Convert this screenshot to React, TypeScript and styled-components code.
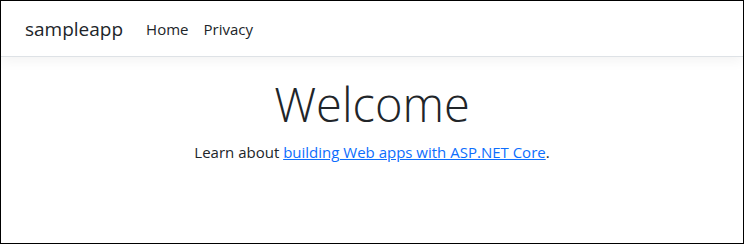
import React from "react";
import styled, { createGlobalStyle } from "styled-components";

const GlobalStyle = createGlobalStyle`
  html, body {
    margin: 0;
    padding: 0;
    background: #ffffff;
  }
  body {
    font-family: "Open Sans", "Noto Sans", sans-serif;
    color: #212529;
  }
  * {
    box-sizing: border-box;
  }
`;

const Frame = styled.div`
  width: 744px;
  height: 244px;
  border: 1px solid #000000;
  overflow: hidden;
  display: flex;
  flex-direction: column;
`;

const Navbar = styled.header`
  height: 56px;
  flex-shrink: 0;
  display: flex;
  align-items: center;
  padding: 0 24px;
  border-bottom: 1px solid #dee2e6;
  box-shadow: 0 4px 12px rgba(0, 0, 0, 0.05);
`;

const Brand = styled.a`
  font-size: 19px;
  color: #212529;
  text-decoration: none;
  margin-right: 23px;
`;

const NavList = styled.nav`
  display: flex;
  gap: 15px;
`;

const NavLink = styled.a`
  font-size: 15px;
  color: #212529;
  text-decoration: none;
`;

const Main = styled.main`
  display: flex;
  flex-direction: column;
  align-items: center;
  padding-top: 19px;
`;

const Title = styled.h1`
  margin: 0;
  font-size: 47px;
  font-weight: 300;
  line-height: 1.2;
`;

const Lead = styled.p`
  margin: 10px 0 0;
  font-size: 15px;
  a {
    color: #0d6efd;
  }
`;

const App = () => {
  return (
    <>
      <GlobalStyle />
      <Frame>
        <Navbar>
          <Brand href="#">sampleapp</Brand>
          <NavList>
            <NavLink href="#">Home</NavLink>
            <NavLink href="#">Privacy</NavLink>
          </NavList>
        </Navbar>
        <Main>
          <Title>Welcome</Title>
          <Lead>
            Learn about <a href="#">building Web apps with ASP.NET Core</a>.
          </Lead>
        </Main>
      </Frame>
    </>
  );
};

export default App;
